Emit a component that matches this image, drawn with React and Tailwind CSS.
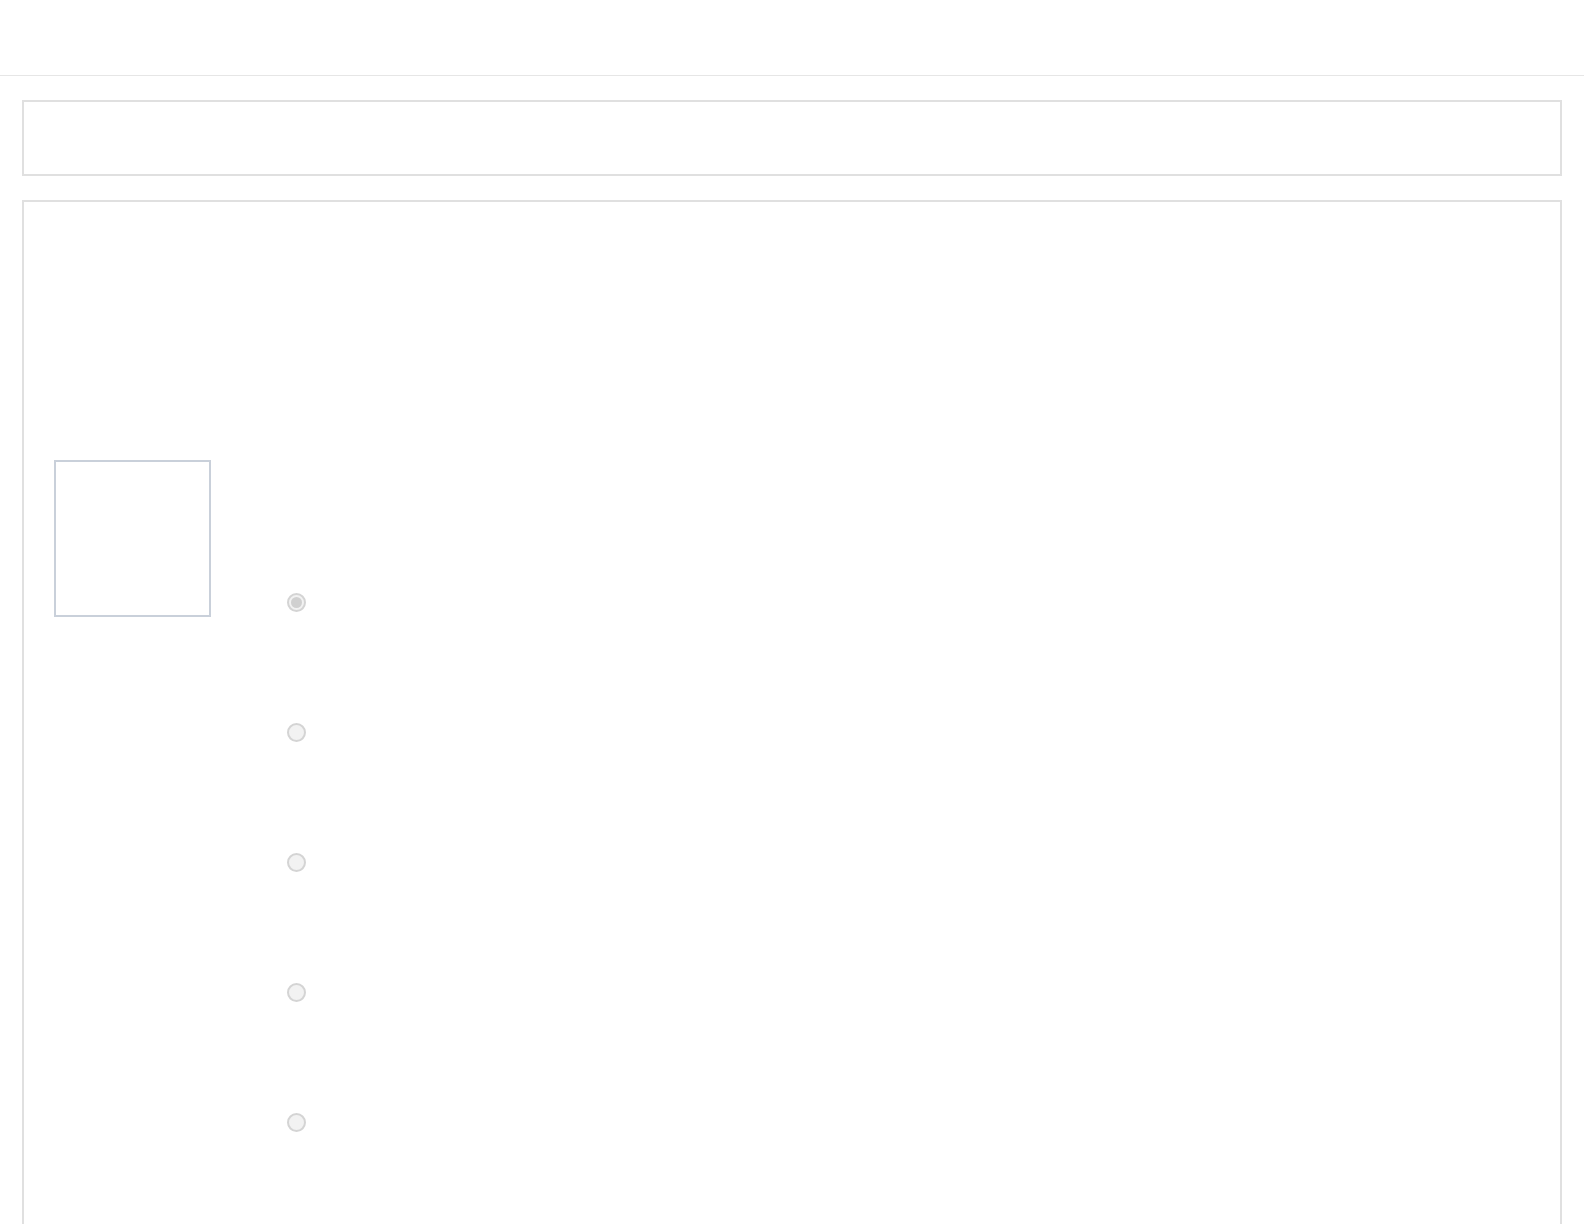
import React from 'react';

const Radio = ({ checked }) => (
    <div className="w-[19px] h-[19px] rounded-full border-2 border-[#d4d4d4] bg-[#f2f2f2] flex items-center justify-center">
        {checked && <div className="w-[11px] h-[11px] rounded-full bg-[#d0d0d0]" />}
    </div>
);

const App = () => {
    const options = [true, false, false, false, false];

    return (
        <div className="min-h-screen bg-white font-['Liberation_Sans',sans-serif]">
            {/* Header */}
            <div className="h-[76px] border-b border-[#e6e6e6]" />

            {/* Toolbar box */}
            <div className="mx-[22px] mt-[24px] h-[76px] border-2 border-[#e0e0e0]" />

            {/* Main panel */}
            <div className="mx-[22px] mt-6 border-2 border-[#e0e0e0] pt-[258px] pl-[30px] pb-[200px]">
                <div className="flex items-start gap-[76px]">
                    <div className="w-[157px] h-[157px] shrink-0 border-2 border-[#c9d0da]" />
                    <div className="flex flex-col gap-[111px] mt-[133px]">
                        {options.map((checked, i) => (
                            <Radio key={i} checked={checked} />
                        ))}
                    </div>
                </div>
            </div>
        </div>
    );
};

export default App;
